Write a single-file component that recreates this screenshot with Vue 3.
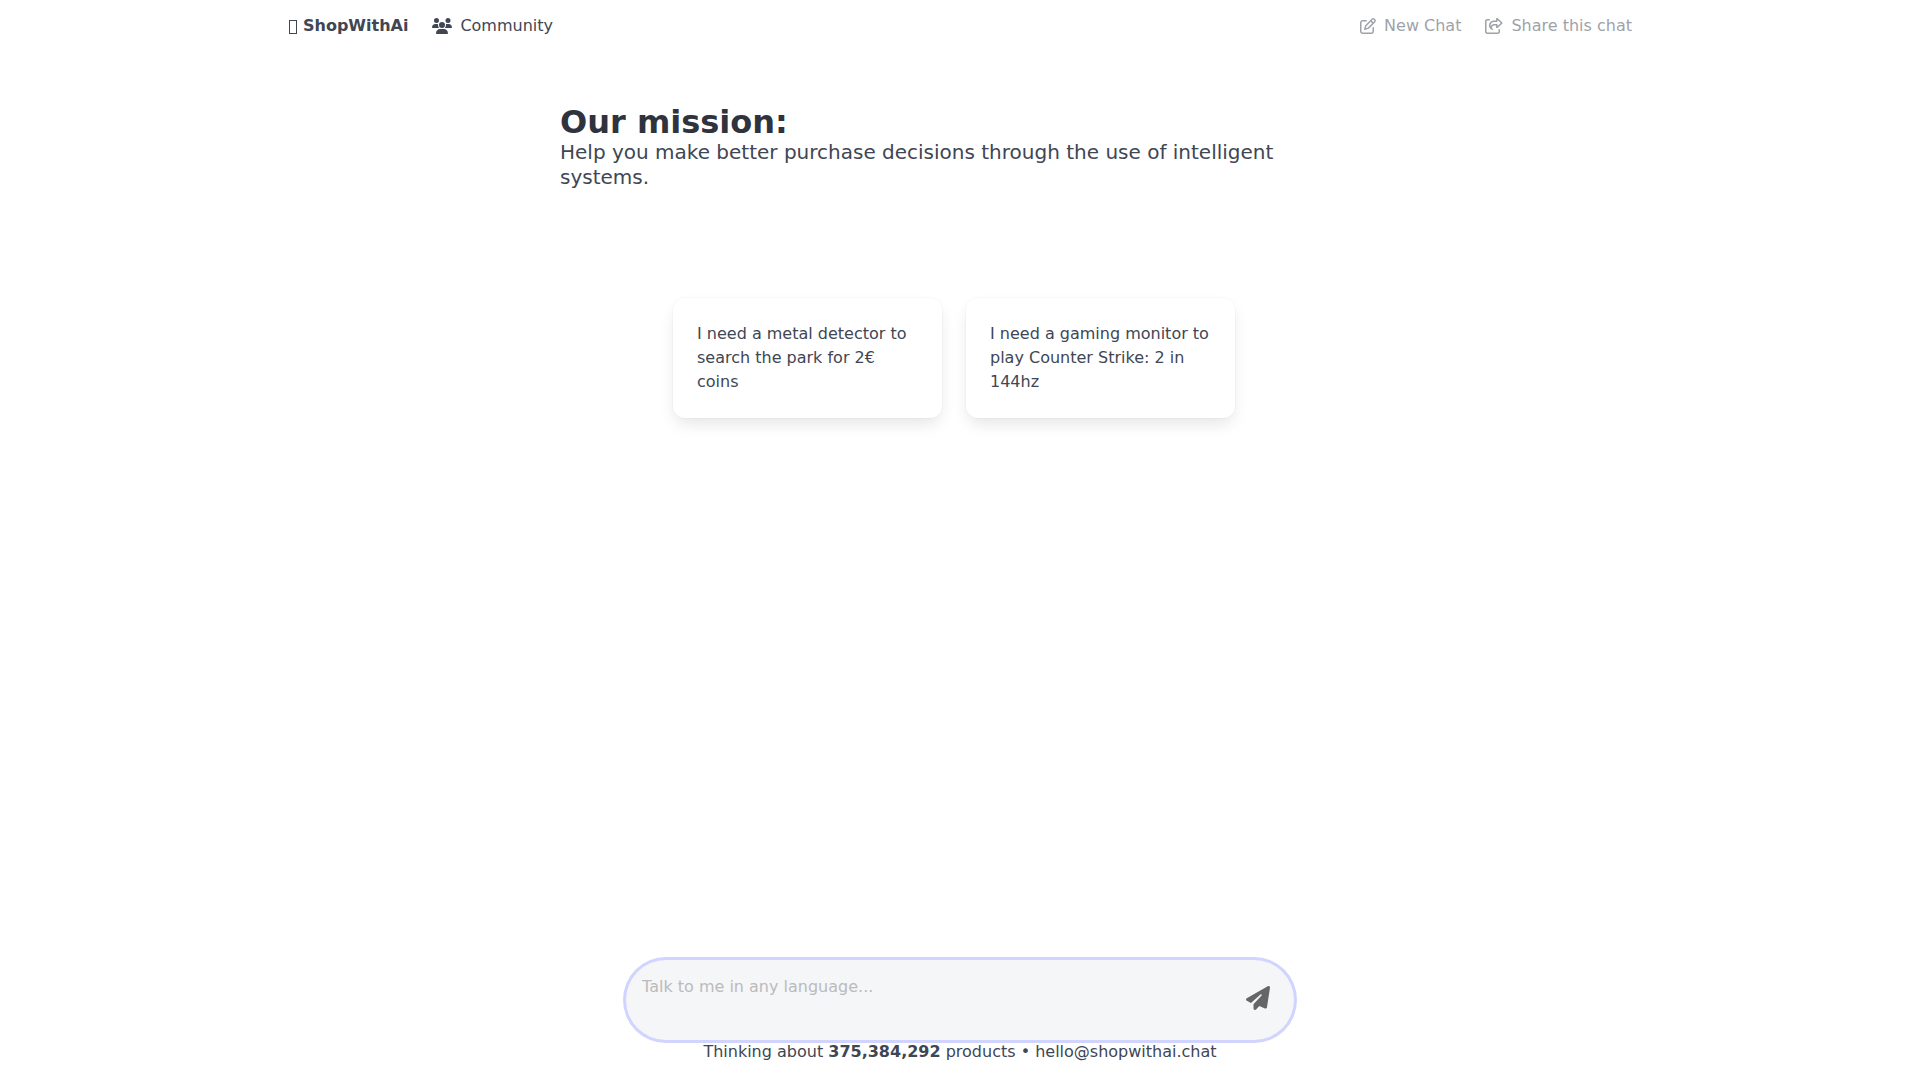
<script setup>
import { ref } from 'vue'

const message = ref('')
const productCount = (375384292).toLocaleString('en-US')
const suggestions = [
  'I need a metal detector to search the park for 2€ coins',
  'I need a gaming monitor to play Counter Strike: 2 in 144hz',
]
</script>

<template>
  <div class="page">
    <header class="navbar">
      <nav class="group">
        <a class="brand" href="#"><span class="mark" aria-hidden="true"></span><strong>ShopWithAi</strong></a>
        <a class="item" href="#">
          <svg class="icon" viewBox="0 0 640 512" width="20" height="16" aria-hidden="true"><path d="M144 0a80 80 0 1 1 0 160A80 80 0 1 1 144 0zM512 0a80 80 0 1 1 0 160A80 80 0 1 1 512 0zM0 298.700C0 239.800 47.800 192 106.700 192h42.700c15.900 0 31 3.500 44.600 9.700c-1.300 7.200-1.900 14.700-1.900 22.300c0 38.200 16.800 72.500 43.300 96c-.2 0-.4 0-.7 0H21.300C9.600 320 0 310.400 0 298.700zM405.300 320c-.2 0-.4 0-.7 0c26.600-23.500 43.300-57.800 43.300-96c0-7.600-.7-15-1.900-22.300c13.600-6.300 28.700-9.700 44.600-9.700h42.700C592.200 192 640 239.800 640 298.700c0 11.800-9.600 21.300-21.300 21.300H405.300zM224 224a96 96 0 1 1 192 0 96 96 0 1 1 -192 0zM128 485.300C128 411.700 187.700 352 261.300 352H378.700C452.300 352 512 411.700 512 485.300c0 14.700-11.900 26.700-26.700 26.700H154.700c-14.700 0-26.700-11.900-26.700-26.700z" /></svg>
          Community
        </a>
      </nav>
      <div class="group">
        <button class="item muted" type="button" disabled>
          <svg class="icon" viewBox="0 0 512 512" width="16" height="16" aria-hidden="true"><path d="M441 58.900L453.100 71c9.400 9.400 9.400 24.600 0 33.900L424 134.100 377.900 88 407 58.900c9.400-9.400 24.600-9.400 33.900 0zM209.800 256.200L344 121.900 390.100 168 255.800 302.200c-2.900 2.900-6.500 5-10.400 6.100l-58.500 16.700 16.700-58.500c1.100-3.900 3.200-7.500 6.100-10.400zM373.100 25L175.800 222.200c-8.700 8.700-15 19.400-18.300 31.100l-28.600 100c-2.400 8.400-.1 17.400 6.100 23.600s15.200 8.500 23.600 6.100l100-28.600c11.800-3.400 22.500-9.700 31.100-18.300L487 138.900c28.100-28.100 28.100-73.700 0-101.800L474.900 25C446.800-3.100 401.200-3.100 373.100 25zM88 64C39.400 64 0 103.400 0 152V424c0 48.600 39.400 88 88 88H360c48.600 0 88-39.400 88-88V312c0-13.300-10.700-24-24-24s-24 10.700-24 24V424c0 22.100-17.900 40-40 40H88c-22.100 0-40-17.900-40-40V152c0-22.100 17.900-40 40-40H200c13.300 0 24-10.700 24-24s-10.700-24-24-24H88z" /></svg>
          New Chat
        </button>
        <button class="item muted" type="button" disabled>
          <svg class="icon" viewBox="0 0 576 512" width="18" height="16" aria-hidden="true"><path d="M400 255.400V240 208c0-8.800-7.200-16-16-16H352 336 289.500c-50.900 0-93.900 33.500-108.300 79.600c-3.300-9.400-5.200-19.800-5.200-31.600c0-61.900 50.100-112 112-112h48 16 32c8.800 0 16-7.200 16-16V80 64.600L506 160 400 255.400zM336 240h16v48c0 17.700 14.300 32 32 32h3.700c7.900 0 15.500-2.900 21.400-8.200l139-125.100c7.600-6.800 11.900-16.500 11.900-26.700s-4.300-19.900-11.900-26.700L409.900 8.900C403.500 3.200 395.300 0 386.700 0C367.500 0 352 15.500 352 34.700V80H336 304 288c-88.400 0-160 71.600-160 160c0 60.400 34.600 99.100 63.900 120.900c5.900 4.400 11.500 8.100 16.700 11.200c4.400 2.700 8.500 4.900 11.900 6.600c3.400 1.700 6.200 3 8.200 3.900c2.200 1 4.600 1.400 7.100 1.400h2.500c9.800 0 17.800-8 17.800-17.800c0-7.800-5.300-14.700-11.600-19.500c-.4-.3-.7-.5-1.100-.8c-1.700-1.100-3.400-2.500-5-4.100c-.8-.8-1.700-1.600-2.500-2.600s-1.600-1.900-2.400-2.900c-1.800-2.500-3.500-5.300-5-8.500c-2.600-6-4.300-13.300-4.300-22.400c0-36.100 29.300-65.500 65.500-65.500H304h32zM72 32C32.200 32 0 64.200 0 104V440c0 39.800 32.200 72 72 72H408c39.800 0 72-32.200 72-72V376c0-13.300-10.700-24-24-24s-24 10.700-24 24v64c0 13.300-10.700 24-24 24H72c-13.300 0-24-10.700-24-24V104c0-13.300 10.700-24 24-24h64c13.300 0 24-10.700 24-24s-10.700-24-24-24H72z" /></svg>
          Share this chat
        </button>
      </div>
    </header>

    <main class="content">
      <section class="mission">
        <h1>Our mission:</h1>
        <p>Help you make better purchase decisions through the use of intelligent systems.</p>
      </section>
      <section class="suggestions" aria-label="Suggestions">
        <button v-for="text in suggestions" :key="text" class="card" type="button" @click="message = text">
          {{ text }}
        </button>
      </section>
    </main>

    <footer class="footer">
      <form class="composer" @submit.prevent>
        <textarea v-model="message" rows="2" aria-label="Message" placeholder="Talk to me in any language..."></textarea>
        <button class="send" type="submit" aria-label="Send">
          <svg class="icon" viewBox="0 0 512 512" width="24" height="24" aria-hidden="true"><path d="M498.100 5.600c10.100 7 15.400 19.100 13.500 31.200l-64 416c-1.500 9.700-7.400 18.200-16 23s-18.900 5.400-28 1.600L284 427.700l-68.500 74.100c-8.900 9.700-22.900 12.900-35.200 8.100S160 493.200 160 480V396.400c0-4 1.500-7.800 4.200-10.700L331.800 202.800c5.800-6.300 5.600-16-.4-22s-15.700-6.400-22-.7L106 360.800 17.700 316.600C7.100 311.300 .3 300.700 0 288.900s5.900-22.800 16.100-28.700l448-256c10.700-6.100 23.900-5.500 34 1.400z" /></svg>
        </button>
      </form>
      <p class="stats">
        Thinking about <strong>{{ productCount }}</strong> products •
        <a href="mailto:hello@shopwithai.chat">hello@shopwithai.chat</a>
      </p>
    </footer>
  </div>
</template>

<style>
body {
  background: #fff;
}
</style>

<style scoped>
* {
  box-sizing: border-box;
}

.page {
  display: flex;
  flex-direction: column;
  min-height: 100vh;
  color: #404654;
  font-family: "DejaVu Sans", sans-serif;
  font-size: 16px;
  line-height: 24px;
}

a {
  color: inherit;
  text-decoration: none;
}

button,
textarea {
  margin: 0;
  padding: 0;
  border: 0;
  background: none;
  color: inherit;
  font: inherit;
}

button {
  cursor: pointer;
}

.icon {
  display: block;
  flex: none;
  fill: currentColor;
}

.navbar {
  display: flex;
  justify-content: space-between;
  align-items: center;
  width: 100%;
  max-width: 1344px;
  min-height: 52px;
  margin: 0 auto;
}

.group {
  display: flex;
  gap: 24px;
}

.brand {
  display: flex;
  align-items: center;
  gap: 6px;
  padding-left: 1px;
}

.mark {
  width: 8px;
  height: 14px;
  margin-top: 2px;
  border: 1px solid currentColor;
}

.item {
  display: flex;
  align-items: center;
  gap: 8px;
}

.muted {
  opacity: 0.5;
  cursor: default;
}

.content {
  flex: 1;
}

.mission {
  max-width: 800px;
  margin: 52px auto 0;
}

.mission h1 {
  margin: 0;
  color: #2e333d;
  font-size: 32px;
  line-height: 36px;
}

.mission p {
  margin: 0;
  font-size: 20px;
  line-height: 25px;
}

.suggestions {
  display: flex;
  gap: 24px;
  max-width: 574px;
  margin: 108px auto 0;
  padding-right: 12px;
}

.card {
  flex: 1;
  padding: 24px;
  border-radius: 12px;
  background: #fff;
  box-shadow: 0 8px 16px -2px rgba(9, 10, 12, 0.1), 0 0 0 1px rgba(9, 10, 12, 0.02);
  text-align: left;
}

.footer {
  padding: 0 16px 16px;
}

.composer {
  display: flex;
  align-items: center;
  max-width: 668px;
  min-height: 80px;
  margin: 0 auto;
  padding: 15px 24px 13px 16px;
  border-radius: 40px;
  background: #f5f6f8;
  box-shadow: 0 0 0 3px #d0d4ff;
}

.composer textarea {
  flex: 1;
  height: 52px;
  outline: none;
  resize: none;
}

.composer textarea::placeholder {
  color: #bbb;
}

.send {
  padding-bottom: 6px;
  color: #666;
}

.stats {
  margin: 0;
  text-align: center;
}
</style>
